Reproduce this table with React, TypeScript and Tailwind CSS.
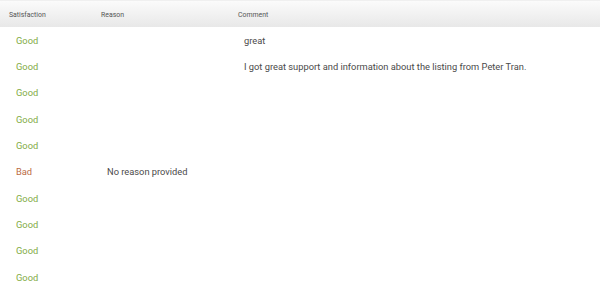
const rows = [
  { satisfaction: 'Good', reason: '', comment: 'great' },
  { satisfaction: 'Good', reason: '', comment: 'I got great support and information about the listing from Peter Tran.' },
  { satisfaction: 'Good', reason: '', comment: '' },
  { satisfaction: 'Good', reason: '', comment: '' },
  { satisfaction: 'Good', reason: '', comment: '' },
  { satisfaction: 'Bad', reason: 'No reason provided', comment: '' },
  { satisfaction: 'Good', reason: '', comment: '' },
  { satisfaction: 'Good', reason: '', comment: '' },
  { satisfaction: 'Good', reason: '', comment: '' },
  { satisfaction: 'Good', reason: '', comment: '' },
];

const App = () => {
  return (
    <div className="w-[600px] h-[290px] overflow-hidden bg-white font-['Roboto',sans-serif]">
      <div className="flex items-center h-[27px] pt-[2px] border-t border-[#f0f0f0] bg-gradient-to-b from-[#fbfbfb] to-[#e8e8e8] text-[6.9px] text-[#555]">
        <div className="w-[101px] pl-[9px]">Satisfaction</div>
        <div className="w-[137px]">Reason</div>
        <div className="flex-1">Comment</div>
      </div>
      {rows.map((row, i) => (
        <div key={i} className="flex items-center h-[26.33px] pt-[1px] text-[9.3px]">
          <div
            className={
              row.satisfaction === 'Good'
                ? 'w-[101px] pl-[16px] text-[#82ab45]'
                : 'w-[101px] pl-[16px] text-[#bb6c45]'
            }
          >
            {row.satisfaction}
          </div>
          <div className="w-[137px] pl-[6px] text-[#4a4a4a]">{row.reason}</div>
          <div className="flex-1 pl-[6px] text-[#4a4a4a]">{row.comment}</div>
        </div>
      ))}
    </div>
  );
};

export default App;
